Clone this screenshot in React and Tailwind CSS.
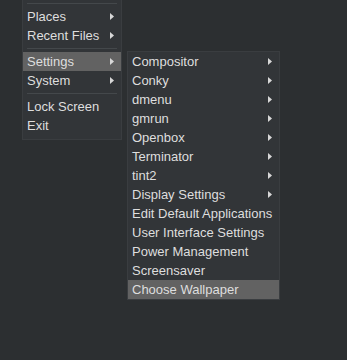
const leftItems = [
    { sep: true },
    { label: 'Places', sub: true },
    { label: 'Recent Files', sub: true },
    { sep: true },
    { label: 'Settings', sub: true, active: true },
    { label: 'System', sub: true },
    { sep: true },
    { label: 'Lock Screen' },
    { label: 'Exit' },
];

const settingsItems = [
    { label: 'Compositor', sub: true },
    { label: 'Conky', sub: true },
    { label: 'dmenu', sub: true },
    { label: 'gmrun', sub: true },
    { label: 'Openbox', sub: true },
    { label: 'Terminator', sub: true },
    { label: 'tint2', sub: true },
    { label: 'Display Settings', sub: true },
    { label: 'Edit Default Applications' },
    { label: 'User Interface Settings' },
    { label: 'Power Management' },
    { label: 'Screensaver' },
    { label: 'Choose Wallpaper', active: true },
];

function Arrow() {
    return (
        <svg width="4" height="7" viewBox="0 0 4 7" className="shrink-0">
            <path d="M0 0 L4 3.5 L0 7 Z" fill="#d8d8d8" />
        </svg>
    );
}

function MenuRow({ item }) {
    if (item.sep) {
        return (
            <div className="h-[7px] flex items-center px-[4px]">
                <div className="h-px w-full bg-[#44484b]" />
            </div>
        );
    }
    return (
        <div className={`h-[19px] flex items-center justify-between pl-[4px] pr-[7px] ${item.active ? 'bg-[#626262]' : ''}`}>
            <span className="leading-[19px] whitespace-nowrap">{item.label}</span>
            {item.sub && <Arrow />}
        </div>
    );
}

export default function App() {
    return (
        <div
            className="w-[347px] h-[360px] bg-[#2c2f31] flex items-start pl-[22px] text-[13px] text-[#dedede]"
            style={{ fontFamily: '"Liberation Sans", Arial, sans-serif' }}
        >
            <div className="w-[100px] bg-[#323538] border-x border-b border-[#3a3d40] pb-[4px]">
                {leftItems.map((item, i) => <MenuRow key={i} item={item} />)}
            </div>
            <div className="ml-[5px] mt-[51px] w-[153px] bg-[#323538] border border-[#3a3d40]">
                {settingsItems.map((item, i) => <MenuRow key={i} item={item} />)}
            </div>
        </div>
    );
}
